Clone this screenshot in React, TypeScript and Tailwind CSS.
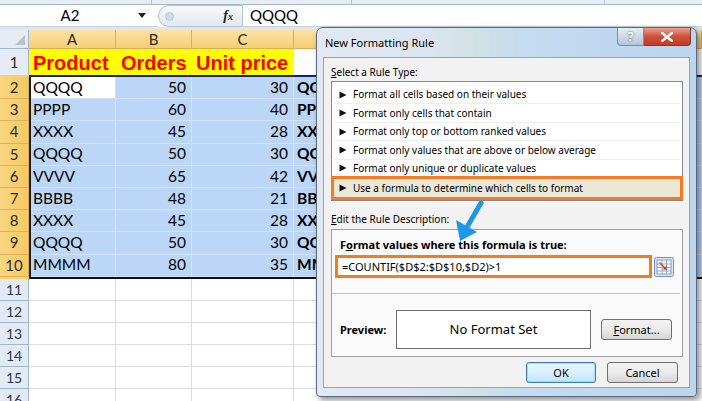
import React from "react";

const rows = [
  ["QQQQ", "50", "30"],
  ["PPPP", "60", "40"],
  ["XXXX", "45", "28"],
  ["QQQQ", "50", "30"],
  ["VVVV", "65", "42"],
  ["BBBB", "48", "21"],
  ["XXXX", "45", "28"],
  ["QQQQ", "50", "30"],
  ["MMMM", "80", "35"],
];

const ruleTypes = [
  "Format all cells based on their values",
  "Format only cells that contain",
  "Format only top or bottom ranked values",
  "Format only values that are above or below average",
  "Format only unique or duplicate values",
];

function Tri() {
  return (
    <svg width="8" height="8" viewBox="0 0 8 8" className="mr-[6px] shrink-0">
      <path d="M0.5 0.5 L7.5 4 L0.5 7.5 Z" fill="#111" />
    </svg>
  );
}

function RangeIcon() {
  return (
    <svg width="20" height="20" viewBox="0 0 20 20">
      <rect x="0.5" y="0.5" width="19" height="19" rx="2" fill="#dbe8f7" stroke="#6f93c4" />
      <rect x="3" y="3" width="14" height="14" fill="#ffffff" stroke="#7d9cc6" />
      <line x1="3" y1="7" x2="17" y2="7" stroke="#8fa9cf" />
      <line x1="3" y1="10.5" x2="17" y2="10.5" stroke="#8fa9cf" />
      <line x1="3" y1="14" x2="17" y2="14" stroke="#8fa9cf" />
      <line x1="8" y1="3" x2="8" y2="17" stroke="#8fa9cf" />
      <line x1="12.5" y1="3" x2="12.5" y2="17" stroke="#8fa9cf" />
      <path d="M6 5 L11 10 L12.5 8.5 L13 13 L8.5 12.5 L10 11 L5 6 Z" fill="#e23a2a" />
    </svg>
  );
}

export default function App() {
  return (
    <div className="relative w-[702px] h-[401px] overflow-hidden bg-white font-['Lato',sans-serif] text-black">
      {/* ribbon bottom strip */}
      <div className="h-[5px] bg-[#e7edf5] border-b border-[#a7b7ca] flex">
        <div className="w-[152px] border-r border-[#b6c4d5]" />
        <div className="w-[200px] border-r border-[#b6c4d5]" />
        <div className="w-[253px] border-r border-[#b6c4d5]" />
      </div>
      {/* formula bar */}
      <div className="h-[22px] flex bg-white">
        <div className="w-[158px] flex items-center border-b border-[#c7d3e1]">
          <span className="w-[140px] text-center text-[15px] leading-none">A2</span>
          <svg width="8" height="5" viewBox="0 0 8 5" className="ml-[-2px]">
            <path d="M0 0 H8 L4 5 Z" fill="#222" />
          </svg>
        </div>
        <div className="w-[85px] h-full rounded-l-[11px] border border-[#b4c2d3] bg-gradient-to-b from-[#f7f9fc] to-[#e1e8f1] flex items-center">
          <div className="ml-[6px] w-[9px] h-[9px] rounded-full bg-[#d3dbe6] border border-[#bcc7d5]" />
          <span className="ml-auto mr-[9px] italic font-bold font-['Liberation_Serif',serif] text-[14px] leading-none text-[#222]">
            f<span className="text-[10px]">x</span>
          </span>
        </div>
        <div className="flex-1 pl-[7px] flex items-center text-[15px] leading-none border-b border-[#c7d3e1]">QQQQ</div>
      </div>
      <div className="h-[3px] bg-[#dfe6ef]" />

      {/* column headers */}
      <div className="h-[19px] flex text-[15px] leading-none text-[#2b2b2b]">
        <div className="w-[29px] bg-[#e6ecf4] border-r border-b border-[#9eb6ce] relative">
          <svg width="10" height="10" viewBox="0 0 10 10" className="absolute right-[3px] bottom-[3px]">
            <path d="M10 0 V10 H0 Z" fill="#b9c3cf" />
          </svg>
        </div>
        {[
          ["A", "w-[87px]"],
          ["B", "w-[76px]"],
          ["C", "w-[102px]"],
          ["", "flex-1"],
        ].map(([l, w], i) => (
          <div
            key={i}
            className={`${w} flex items-center justify-center bg-gradient-to-b from-[#fbe2a6] to-[#f6cf73] border-r border-b border-[#dcae5a]`}
          >
            {l}
          </div>
        ))}
      </div>

      {/* row 1 */}
      <div className="h-[26px] flex">
        <div className="w-[29px] flex items-center justify-center bg-[#e6ecf5] border-r border-[#9eb6ce] text-[15px] text-[#2b2b2b]">1</div>
        <div className="w-[290px] flex h-full items-end font-['Liberation_Sans',sans-serif] font-bold text-[20px] leading-none text-[#ff0000]">
          <div className="w-[87px] h-full bg-[#ffff00] pl-[4px] flex items-center pt-[2px]">Product</div>
          <div className="w-[76px] h-full bg-[#ffff00] pl-[5px] flex items-center pt-[2px]">Orders</div>
          <div className="w-[102px] h-full bg-[#ffff00] pl-[4px] flex items-center pt-[2px]">Unit price</div>
          <div className="flex-1 h-full bg-white" />
        </div>
      </div>

      {/* rows 2-10 */}
      <div className="flex">
        <div className="w-[29px] flex flex-col pt-[2px] pb-[2px] bg-[#f7d073]">
          {rows.map((_, i) => (
            <div
              key={i}
              className="h-[22.2px] flex items-center justify-center text-[15px] leading-none text-[#2b2b2b] border-b border-r border-[#e3b155] bg-gradient-to-r from-[#f9d681] to-[#f5ca62]"
            >
              {i + 2}
            </div>
          ))}
        </div>
        <div className="flex-1 border-t-2 border-l-2 border-b-2 border-t-[#15207a] border-l-[#1b1b1b] border-b-[#111] flex flex-col text-[15.5px] leading-none">
          {rows.map((r, i) => (
            <div key={i} className="h-[22.2px] flex">
              <div
                className={`w-[85px] flex items-center pl-[2px] border-r border-b border-[#d3e2f4] ${
                  i === 0 ? "bg-white" : "bg-[#bbd6f6]"
                }`}
              >
                {r[0]}
              </div>
              <div className="w-[76px] flex items-center justify-end pr-[5px] bg-[#bbd6f6] border-r border-b border-[#d3e2f4]">{r[1]}</div>
              <div className="w-[102px] flex items-center justify-end pr-[5px] bg-[#bbd6f6] border-r border-b border-[#d3e2f4]">{r[2]}</div>
              <div className="flex-1 flex items-center pl-[3px] bg-[#bbd6f6] border-b border-[#d3e2f4] font-bold">{r[0]}</div>
            </div>
          ))}
        </div>
      </div>

      {/* rows 11-16 */}
      {[11, 12, 13, 14, 15, 16].map((n) => (
        <div key={n} className="h-[22px] flex">
          <div className="w-[29px] flex items-start pt-[4px] justify-center bg-[#e3eaf4] border-r border-b border-[#9eb6ce] text-[14px] leading-none text-[#2b3b55]">{n}</div>
          <div className="w-[87px] border-r border-b border-[#dadcdd]" />
          <div className="w-[76px] border-r border-b border-[#dadcdd]" />
          <div className="w-[102px] border-r border-b border-[#dadcdd]" />
          <div className="flex-1 border-b border-[#dadcdd]" />
        </div>
      ))}

      {/* dialog */}
      <div className="absolute left-[316px] top-[27px] w-[381px] h-[370px] rounded-t-[7px] rounded-b-[4px] border border-[#5a6b80] bg-[linear-gradient(90deg,#e2e9f2_0%,#dbe5f1_28%,#d2e2e4_40%,#c4dbf0_55%,#bcd4ee_100%)] shadow-[3px_3px_6px_rgba(0,0,0,0.45)] flex flex-col font-['Noto_Sans',sans-serif]">
        <div className="h-[29px] flex items-start shrink-0">
          <div className="pl-[8px] pt-[8px] text-[11px] leading-[14px] text-black">New Formatting Rule</div>
          <div className="ml-auto mr-[5px] flex">
            <div className="w-[27px] h-[18px] rounded-bl-[4px] border border-t-0 border-[#7b8ba0] bg-gradient-to-b from-[#e6edf5] to-[#b3c4d8] flex items-center justify-center text-[13px] font-bold text-white leading-none [text-shadow:0_0_2px_#445]">
              ?
            </div>
            <div className="w-[47px] h-[18px] rounded-br-[4px] border border-t-0 border-l-0 border-[#7a3a30] bg-gradient-to-b from-[#e9a190] via-[#cf4f3a] to-[#c23b26] flex items-center justify-center">
              <svg width="12" height="10" viewBox="0 0 12 10">
                <path d="M1 1 L11 9 M11 1 L1 9" stroke="#ffffff" strokeWidth="2.6" strokeLinecap="square" />
              </svg>
            </div>
          </div>
        </div>
        <div className="mx-[6px] mb-[8px] flex-1 border border-[#8fa4bd] bg-[#f2f2f2] pl-[7px] pr-[6px] flex flex-col text-[10px] leading-[13px] text-black">
          <div className="pt-[8px] h-[22px]">
            <span className="underline">S</span>elect a Rule Type:
          </div>
          <div className="mt-[1px] h-[120px] border border-[#828790] bg-white pt-[4px] flex flex-col">
            {ruleTypes.map((t, i) => (
              <div key={i} className="h-[18.6px] mx-[2px] flex items-center pl-[5px] border-b border-[#eeeeee]">
                <Tri />
                <span>{t}</span>
              </div>
            ))}
            <div className="h-[24px] mt-[-2px] -mx-[1px] border-[3px] border-[#f47b20] bg-[#ece8d8] flex items-center pl-[5px]">
              <Tri />
              <span>Use a formula to determine which cells to format</span>
            </div>
          </div>
          <div className="mt-[12px] h-[15px]">
            <span className="underline">E</span>dit the Rule Description:
          </div>
          <div className="mt-[1px] h-[128px] border border-[#a0a0a0] bg-[#fafafa] flex flex-col">
            <div className="pt-[8px] pl-[8px] h-[22px] font-bold text-[11px] leading-[13px]">
              F<span className="underline">o</span>rmat values where this formula is true:
            </div>
            <div className="mt-[3px] flex items-center pl-[3px]">
              <div className="w-[317px] h-[23px] border-[3px] border-[#f47b20] bg-white flex items-center pl-[4px] text-[11px]">
                =COUNTIF($D$2:$D$10,$D2)&gt;1
              </div>
              <div className="ml-[2px]">
                <RangeIcon />
              </div>
            </div>
            <div className="mt-[15px] mr-[2px] h-[1px] bg-[#a9cbea]" />
            <div className="mt-[16px] flex items-center pl-[8px]">
              <div className="w-[56px] font-bold text-[11px]">Preview:</div>
              <div className="w-[195px] h-[39px] border border-[#6e6e6e] bg-white flex items-center justify-center text-[13px]">
                No Format Set
              </div>
              <div className="ml-[10px] w-[71px] h-[21px] rounded-[3px] border border-[#707070] bg-gradient-to-b from-[#f2f2f2] via-[#ebebeb] to-[#d5d5d5] flex items-center justify-center text-[11px]">
                <span className="underline">F</span>ormat...
              </div>
            </div>
          </div>
          <div className="mt-[5px] flex justify-end pr-[5px] text-[11px]">
            <div className="w-[70px] h-[21px] rounded-[3px] border border-[#3c7fb1] bg-gradient-to-b from-[#eaf6fd] via-[#d9f0fc] to-[#bee6fd] shadow-[inset_0_0_0_1px_#a7d9f5] flex items-center justify-center">
              OK
            </div>
            <div className="ml-[11px] w-[71px] h-[21px] rounded-[3px] border border-[#707070] bg-gradient-to-b from-[#f2f2f2] via-[#ebebeb] to-[#d5d5d5] flex items-center justify-center">
              Cancel
            </div>
          </div>
        </div>
      </div>

      {/* blue annotation arrow */}
      <svg className="absolute left-0 top-0 pointer-events-none" width="702" height="401" viewBox="0 0 702 401">
        <line x1="481" y1="203" x2="467" y2="227" stroke="#1e98e6" strokeWidth="5" strokeLinecap="round" />
        <path d="M460 241 L456 220 L477 232 Z" fill="#1e98e6" />
      </svg>
    </div>
  );
}
